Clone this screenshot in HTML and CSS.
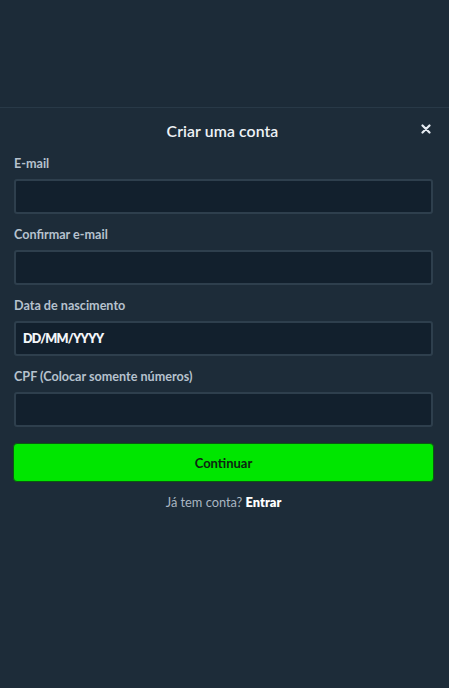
FILE: index.html
```html
<!DOCTYPE html>
<html lang="pt-BR">
<head>
<meta charset="utf-8">
<title>Criar uma conta</title>
<link rel="stylesheet" href="styles.css">
</head>
<body>
<div class="page">
  <section class="modal">
    <header class="modal-header">
      <h1 class="modal-title">Criar uma conta</h1>
      <button class="close" aria-label="Fechar">
        <svg width="10" height="10" viewBox="0 0 10 10"><path d="M1.5 1.5 L8.5 8.5 M8.5 1.5 L1.5 8.5" stroke="#e6ecf2" stroke-width="2.2" stroke-linecap="round"/></svg>
      </button>
    </header>
    <form class="form">
      <div class="field">
        <label class="label">E-mail</label>
        <input class="input" type="text">
      </div>
      <div class="field">
        <label class="label">Confirmar e-mail</label>
        <input class="input" type="text">
      </div>
      <div class="field">
        <label class="label">Data de nascimento</label>
        <input class="input input-date" type="text" value="DD/MM/YYYY">
      </div>
      <div class="field">
        <label class="label">CPF (Colocar somente números)</label>
        <input class="input" type="text">
      </div>
      <button type="button" class="btn">Continuar</button>
      <p class="login">Já tem conta? <a class="login-link">Entrar</a></p>
    </form>
  </section>
</div>
</body>
</html>
```

FILE: styles.css
```css
* { box-sizing: border-box; }
html, body { margin: 0; padding: 0; }
body {
  background: #1c2b38;
  font-family: Lato, "Open Sans", Arial, sans-serif;
  width: 449px;
  height: 688px;
  overflow: hidden;
}
.page { padding-top: 107px; }
.modal {
  border-top: 1px solid #283947;
  background: #1d2c39;
  padding: 0 16px 0 14px;
  height: 581px;
}
.modal-header {
  position: relative;
  padding-top: 14px;
  height: 49px;
}
.modal-title {
  margin: 0;
  text-align: center;
  font-size: 15.8px;
  line-height: 18px;
  font-weight: 600;
  color: #eef2f6;
  padding-right: 2px;
  letter-spacing: 0.1px;
}
.close {
  position: absolute;
  right: 0;
  top: 14px;
  width: 14px;
  height: 14px;
  padding: 0;
  border: 0;
  background: none;
  display: flex;
  align-items: center;
  justify-content: center;
}
.form { display: flex; flex-direction: column; }
.field { display: flex; flex-direction: column; gap: 8px; margin-bottom: 14px; }
.label {
  font-size: 12.6px;
  line-height: 14px;
  font-weight: 700;
  color: #b6c2ce;
}
.input {
  height: 35px;
  background: #12202d;
  border: 2px solid #2e3f4d;
  border-radius: 3px;
  padding: 0 7px;
  font-family: inherit;
  font-size: 12.5px;
  font-weight: 800;
  color: #f2f5f8;
  outline: none;
}
.input-date { letter-spacing: -0.8px; }
.btn {
  margin: 2px -1px 0;
  height: 39px;
  background: #00e600;
  border: 1px solid #0a5a10;
  border-radius: 4px;
  font-family: inherit;
  font-size: 13px;
  font-weight: 700;
  color: #0d2412;
}
.login {
  margin: 13px 0 0;
  text-align: center;
  font-size: 12.8px;
  line-height: 14px;
  color: #aab6c2;
}
.login-link { color: #ffffff; font-weight: 800; }
```
